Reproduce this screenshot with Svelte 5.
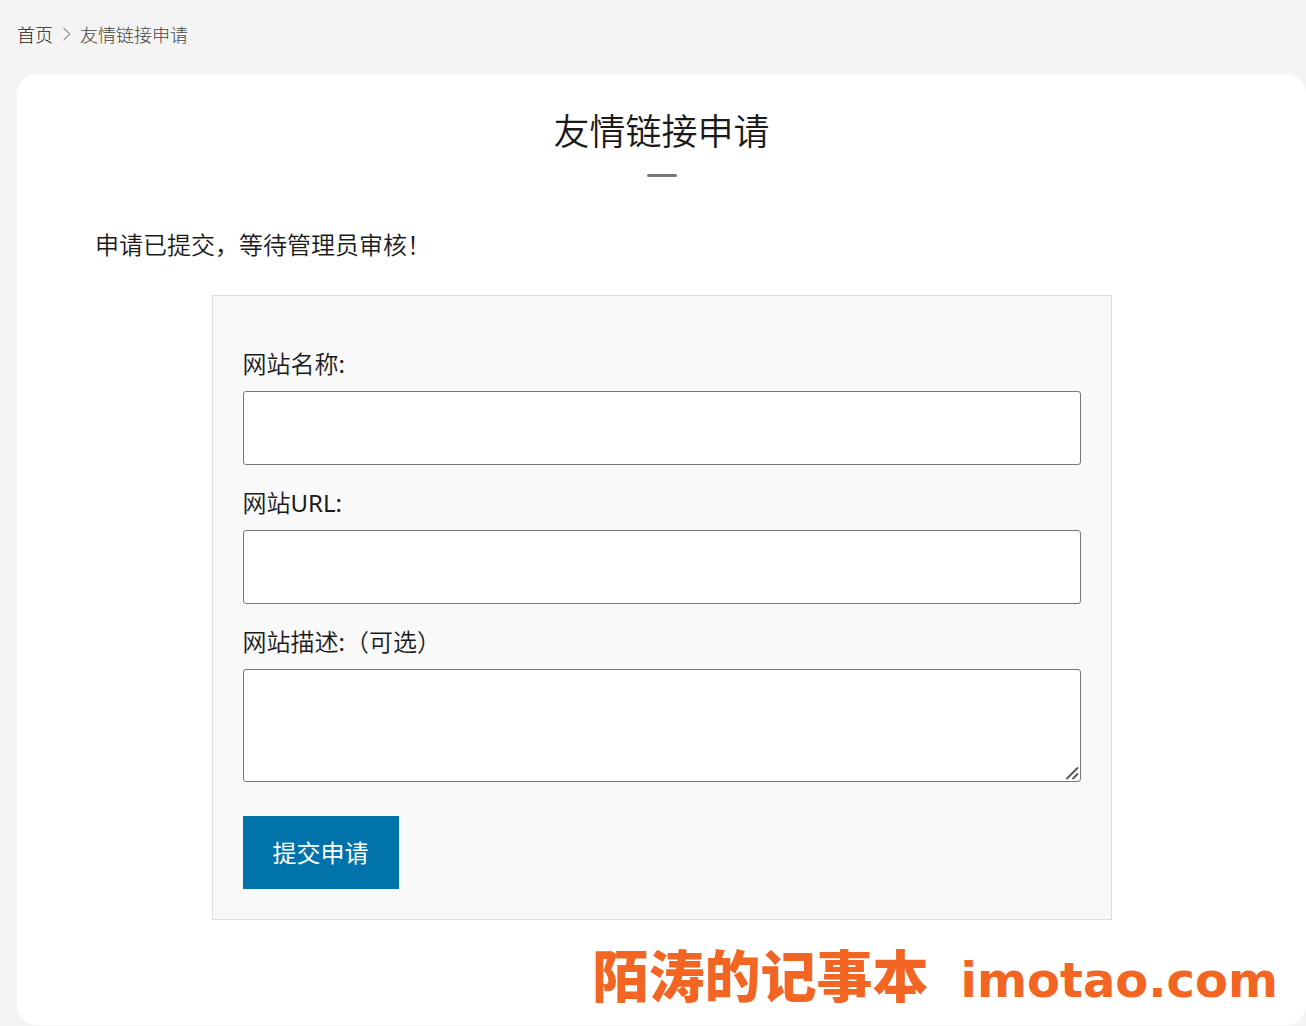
<script lang="ts">
	let name = '';
	let url = '';
	let description = '';
	let message = '申请已提交，等待管理员审核！';
</script>

<div class="page">
	<nav class="breadcrumb" aria-label="Breadcrumb">
		<a href="/">首页</a>
		<svg width="9" height="14" viewBox="0 0 9 14" aria-hidden="true">
			<path d="M1.5 1 7.8 7l-6.3 6" />
		</svg>
		<span>友情链接申请</span>
	</nav>

	<main class="card">
		<h1>友情链接申请</h1>
		<p class="message">{message}</p>

		<form on:submit|preventDefault>
			<label for="site-name">网站名称:</label>
			<input id="site-name" type="text" bind:value={name} />

			<label for="site-url">网站URL:</label>
			<input id="site-url" type="text" bind:value={url} />

			<label for="site-description">网站描述:（可选）</label>
			<div class="resizable">
				<textarea id="site-description" bind:value={description}></textarea>
				<svg class="grip" width="14" height="14" viewBox="0 0 14 14" aria-hidden="true">
					<path d="M1.5 13 13 1.5M7.5 13 13 7.5" />
				</svg>
			</div>

			<button type="submit">提交申请</button>
		</form>

		<div class="signature">
			<span class="site">陌涛的记事本</span>
			<span class="domain">imotao.com</span>
		</div>
	</main>
</div>

<style>
	:global(body) {
		background: #f4f4f4;
	}

	.page {
		padding-left: 17px;
		font-family: 'Noto Sans', 'Noto Sans CJK SC', sans-serif;
		font-weight: 350;
		color: #1a1a1a;
	}

	.breadcrumb {
		display: flex;
		align-items: center;
		gap: 9px;
		height: 68px;
		padding-bottom: 6px;
		font-size: 18px;
		font-weight: 300;
		color: #444;
	}

	.breadcrumb a {
		color: #222;
		text-decoration: none;
	}

	.breadcrumb svg {
		fill: none;
		stroke: #555;
	}

	.card {
		box-sizing: border-box;
		padding: 30px 78px 18px;
		border-radius: 20px;
		background: #fff;
	}

	h1 {
		margin: 0;
		font-size: 36px;
		line-height: 56px;
		font-weight: 350;
		text-align: center;
	}

	h1::after {
		content: '';
		display: block;
		width: 30px;
		height: 3px;
		margin: 14px auto 0;
		border-radius: 2px;
		background: #777;
	}

	.message {
		margin: 48px 0 30px;
		font-size: 24px;
		line-height: 40px;
	}

	form {
		box-sizing: border-box;
		max-width: 900px;
		margin: 0 auto;
		padding: 48px 30px 30px;
		border: 1px solid #ddd;
		background: #f9f9f9;
	}

	label {
		display: block;
		margin-bottom: 7px;
		font-family: 'Noto Sans', 'Noto Sans CJK SC DemiLight', 'Noto Sans CJK SC', sans-serif;
		font-size: 24px;
		font-weight: 400;
		line-height: 40px;
	}

	input,
	textarea {
		display: block;
		box-sizing: border-box;
		width: 100%;
		height: 74px;
		margin: 0 0 18px;
		padding: 10px;
		border: 1px solid #767676;
		border-radius: 3px;
		background: #fff;
		font: inherit;
		font-size: 24px;
	}

	.resizable {
		position: relative;
		margin-bottom: 34px;
	}

	textarea {
		height: 113px;
		margin: 0;
		resize: vertical;
	}

	textarea::-webkit-resizer {
		background: transparent;
	}

	.grip {
		position: absolute;
		right: 2px;
		bottom: 2px;
		fill: none;
		stroke: #555;
		stroke-width: 1.8;
		pointer-events: none;
	}

	button {
		display: block;
		padding: 0 30px;
		border: 0;
		background: #0073aa;
		color: #fff;
		font-family: inherit;
		font-size: 24px;
		line-height: 73px;
		cursor: pointer;
	}

	.signature {
		display: flex;
		justify-content: flex-end;
		align-items: baseline;
		gap: 32px;
		height: 64px;
		margin: 23px -50px 0 0;
		line-height: 64px;
		color: #f26522;
	}

	.site {
		font-size: 56px;
		font-weight: 900;
	}

	.domain {
		font-family: 'DejaVu Sans', sans-serif;
		font-size: 48px;
		font-weight: 700;
	}
</style>
